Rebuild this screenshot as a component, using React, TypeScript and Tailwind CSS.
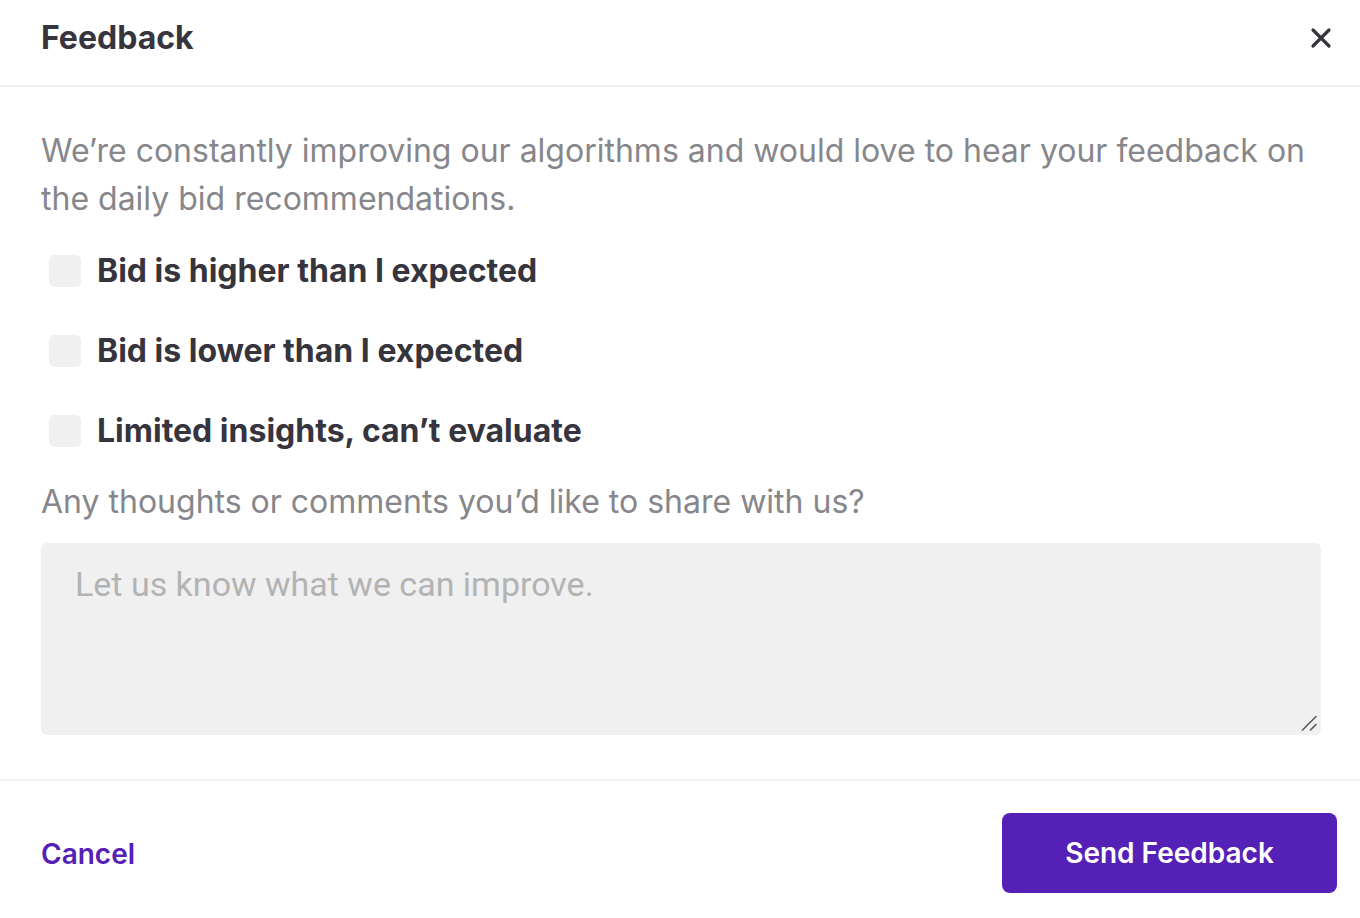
import { useState } from "react";

const options = [
  "Bid is higher than I expected",
  "Bid is lower than I expected",
  "Limited insights, can’t evaluate",
];

function CloseIcon() {
  return (
    <svg width="22" height="22" viewBox="0 0 22 22" fill="none">
      <path
        d="M3 3L19 19M19 3L3 19"
        stroke="#36343d"
        strokeWidth="3.2"
        strokeLinecap="round"
      />
    </svg>
  );
}

function ResizeGrip() {
  return (
    <svg
      width="16"
      height="16"
      viewBox="0 0 16 16"
      fill="none"
      className="pointer-events-none absolute right-[4px] bottom-[4px]"
    >
      <path d="M1.5 15L15 1.5M9.5 15L15 9.5" stroke="#5a5a5a" strokeWidth="1.6" strokeLinecap="round" />
    </svg>
  );
}

export default function App() {
  const [checked, setChecked] = useState<boolean[]>([false, false, false]);
  const [comment, setComment] = useState("");

  return (
    <div
      className="flex h-[918px] w-[1360px] flex-col bg-white"
      style={{ fontFamily: "Inter, 'Noto Sans', sans-serif" }}
    >
      <header className="flex h-[87px] items-center justify-between border-b-2 border-[#f0f0f0] pl-[41px] pr-[28px]">
        <h1 className="pb-[9px] text-[32px] font-bold text-[#36343d]">Feedback</h1>
        <button className="mb-[9px] flex h-[22px] w-[22px] items-center justify-center">
          <CloseIcon />
        </button>
      </header>

      <main className="flex flex-col border-b-2 border-[#f0f0f0] px-[41px] pt-[40px] pr-[39px] pb-[44px]">
        <p className="text-[32px] leading-[48px] text-[#86868b]">
          We’re constantly improving our algorithms and would love to hear your feedback on the daily bid
          recommendations.
        </p>

        <div className="mt-[8px] flex flex-col">
          {options.map((label, i) => (
            <label key={label} className="flex h-[80px] cursor-pointer items-center gap-[16px] pl-[8px]">
              <input
                type="checkbox"
                className="hidden"
                checked={checked[i]}
                onChange={() => setChecked(checked.map((c, j) => (j === i ? !c : c)))}
              />
              <span
                className={
                  checked[i]
                    ? "h-[32px] w-[32px] rounded-[5px] bg-[#5520b5]"
                    : "h-[32px] w-[32px] rounded-[5px] bg-[#f0f0f0]"
                }
              />
              <span className="text-[32px] font-bold text-[#36343d]">{label}</span>
            </label>
          ))}
        </div>

        <p className="mt-[7px] text-[32px] leading-[48px] text-[#86868b]">
          Any thoughts or comments you’d like to share with us?
        </p>

        <div className="relative mt-[17px] flex">
          <textarea
            value={comment}
            onChange={(e) => setComment(e.target.value)}
            placeholder="Let us know what we can improve."
            className="h-[192px] w-full resize-none rounded-[6px] bg-[#f0f0f0] px-[34px] pt-[19px] pb-[18px] text-[34px] leading-[44px] text-[#36343d] outline-none placeholder:text-[#b3b3b3]"
            style={{ fontFamily: "Roboto, sans-serif", fontWeight: 400 }}
          />
          <ResizeGrip />
        </div>
      </main>

      <footer className="flex flex-1 items-start justify-between pl-[41px] pr-[23px] pt-[32px]">
        <button className="mt-[20px] text-[28px] font-semibold text-[#5520b5]">Cancel</button>
        <button className="h-[80px] w-[335px] rounded-[8px] bg-[#5520b5] text-[28px] font-semibold text-white">
          Send Feedback
        </button>
      </footer>
    </div>
  );
}
